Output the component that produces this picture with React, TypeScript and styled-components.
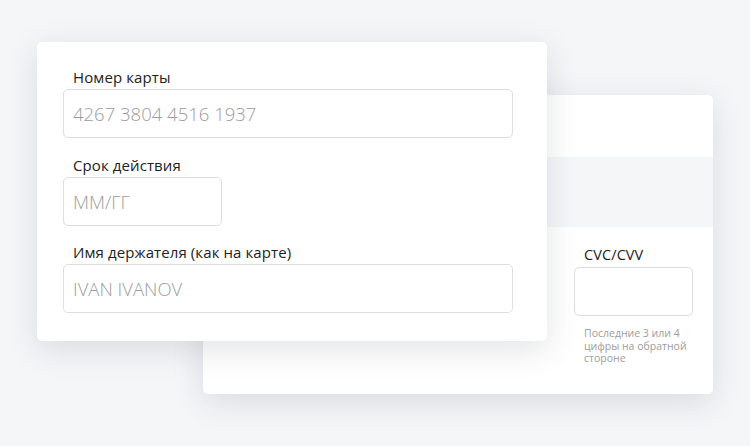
import React from "react";
import styled, { createGlobalStyle } from "styled-components";

const Global = createGlobalStyle`
  html, body {
    margin: 0;
    padding: 0;
    background: #f5f6f8;
  }
  body {
    font-family: "Open Sans", "Noto Sans", sans-serif;
    -webkit-font-smoothing: antialiased;
  }
  * { box-sizing: border-box; }
`;

const Stage = styled.div`
  width: 750px;
  height: 446px;
  background: #f5f6f8;
  padding: 42px 0 0 37px;
  overflow: hidden;
`;

const Stack = styled.div`
  display: grid;
  width: 676px;
`;

const Card = styled.section<{ $front?: boolean }>`
  grid-area: 1 / 1;
  width: 510px;
  height: 299px;
  background: #ffffff;
  border-radius: 5px;
  box-shadow: 0 8px 32px rgba(30, 36, 52, 0.13);
  z-index: ${(p) => (p.$front ? 2 : 1)};
  margin: ${(p) => (p.$front ? "0" : "53px 0 0 166px")};
  display: flex;
  flex-direction: column;
  overflow: hidden;
`;

const FrontBody = styled.div`
  display: flex;
  flex-direction: column;
  gap: 17.5px;
  padding: 26px 34px 28px 26px;
`;

const Field = styled.div`
  display: flex;
  flex-direction: column;
`;

const Label = styled.label<{ $small?: boolean }>`
  display: block;
  padding-left: 10px;
  margin-bottom: 3px;
  font-size: ${(p) => (p.$small ? "14.5px" : "15px")};
  line-height: 18px;
  font-weight: 400;
  color: #222;
  letter-spacing: 0.1px;
  white-space: nowrap;
`;

const Input = styled.div<{ $w: number }>`
  width: ${(p) => p.$w}px;
  height: 49px;
  border: 1px solid #dedede;
  border-radius: 5px;
  background: #fff;
  display: flex;
  align-items: center;
  padding-left: 9px;
  font-size: 18.5px;
  font-weight: 300;
  color: #9c9c9c;
  white-space: nowrap;
`;

const Header = styled.div`
  height: 62px;
  flex: none;
`;

const Band = styled.div`
  height: 70px;
  flex: none;
  background: #f5f6f8;
`;

const BackBody = styled.div`
  display: flex;
  justify-content: flex-end;
  padding: 19px 20px 0 0;
`;

const CvcBlock = styled.div`
  display: flex;
  flex-direction: column;
  width: 119px;
`;

const Hint = styled.p`
  margin: 11px 0 0;
  padding-left: 10px;
  font-size: 10.5px;
  line-height: 12.5px;
  color: #9d9d9d;
  white-space: nowrap;
`;

export default function App() {
  return (
    <>
      <Global />
      <Stage>
        <Stack>
          <Card>
            <Header />
            <Band />
            <BackBody>
              <CvcBlock>
                <Label $small>CVC/CVV</Label>
                <Input $w={119} />
                <Hint>
                  Последние 3 или 4
                  <br />
                  цифры на обратной
                  <br />
                  стороне
                </Hint>
              </CvcBlock>
            </BackBody>
          </Card>
          <Card $front>
            <FrontBody>
              <Field>
                <Label>Номер карты</Label>
                <Input $w={450}>4267 3804 4516 1937</Input>
              </Field>
              <Field>
                <Label>Срок действия</Label>
                <Input $w={159}>ММ/ГГ</Input>
              </Field>
              <Field>
                <Label>Имя держателя (как на карте)</Label>
                <Input $w={450}>IVAN IVANOV</Input>
              </Field>
            </FrontBody>
          </Card>
        </Stack>
      </Stage>
    </>
  );
}
